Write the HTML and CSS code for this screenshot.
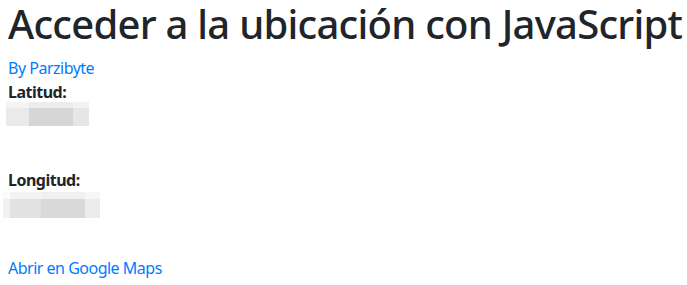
FILE: index.html
```html
<!DOCTYPE html>
<html lang="es">
<head>
<meta charset="utf-8">
<title>Acceder a la ubicación con JavaScript</title>
<link rel="stylesheet" href="styles.css">
</head>
<body>
<main class="page">
  <h1 class="title">Acceder a la ubicación con JavaScript</h1>
  <a class="link" href="#">By Parzibyte</a>
  <div class="field">
    <strong class="label">Latitud:</strong>
    <div class="blur blur-lat">
      <span class="seg s1"></span><span class="seg s2"></span><span class="seg s3"></span>
    </div>
  </div>
  <div class="field field-lon">
    <strong class="label">Longitud:</strong>
    <div class="blur blur-lon">
      <span class="seg t0"></span><span class="seg t1"></span><span class="seg t2"></span><span class="seg t3"></span>
    </div>
  </div>
  <a class="link maps" href="#">Abrir en Google Maps</a>
</main>
</body>
</html>
```
FILE: styles.css
```css
html, body {
  margin: 0;
  padding: 0;
  background: #fff;
}
body {
  font-family: "Noto Sans", "Open Sans", sans-serif;
  font-size: 16px;
  line-height: 24px;
  letter-spacing: -0.5px;
  color: #212529;
}
.page {
  padding: 0 8px;
  display: flex;
  flex-direction: column;
  align-items: flex-start;
}
.title {
  margin: 0 0 8px;
  font-size: 40px;
  line-height: 48px;
  font-weight: 500;
  letter-spacing: -0.75px;
  white-space: nowrap;
}
.link {
  color: #007bff;
  text-decoration: none;
}
.field {
  display: flex;
  flex-direction: column;
  align-items: flex-start;
}
.label {
  font-weight: 700;
}
.blur {
  display: flex;
  height: 24px;
  margin-top: -2px;
}
.blur-lat {
  margin-left: -2px;
}
.seg { display: block; height: 100%; }
.s1 { width: 23px; background: linear-gradient(#f4f4f4 0 6px, #eaeaea 6px); }
.s2 { width: 44px; background: linear-gradient(#ececec 0 6px, #d6d6d6 6px); }
.s3 { width: 16px; background: linear-gradient(#f2f2f2 0 6px, #e6e6e6 6px); }
.field-lon {
  margin-top: 42px;
}
.blur-lon {
  margin-left: -5px;
  height: 26px;
  margin-top: 0;
}
.t0 { width: 7px; background: linear-gradient(#fbfbfb 0 7px, #f1f1f1 7px); }
.t1 { width: 31px; background: linear-gradient(#f3f3f3 0 7px, #e2e2e2 7px); }
.t2 { width: 44px; background: linear-gradient(#f0f0f0 0 7px, #d9d9d9 7px); }
.t3 { width: 15px; background: linear-gradient(#f7f7f7 0 7px, #ececec 7px); }
.maps {
  margin-top: 38px;
}
```
